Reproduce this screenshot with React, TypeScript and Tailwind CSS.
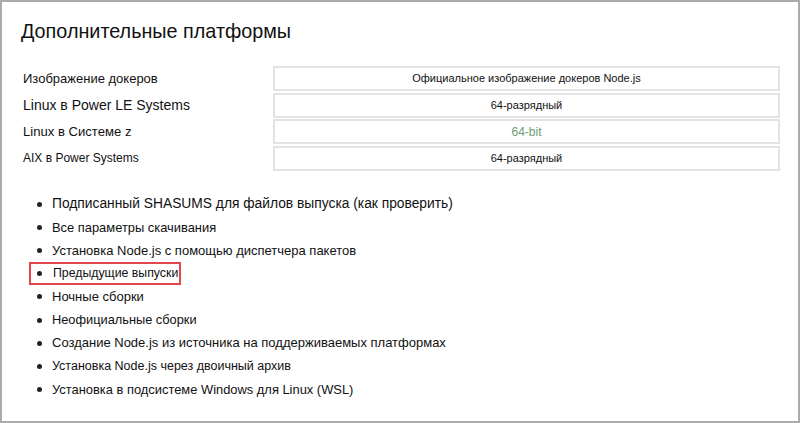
import { FC, ReactElement } from 'react'

type PlatformRow = {
  label: string
  labelSize: string
  value: string
  muted?: boolean
}

const platforms: PlatformRow[] = [
  { label: 'Изображение докеров', labelSize: 'text-[13px]', value: 'Официальное изображение докеров Node.js' },
  { label: 'Linux в Power LE Systems', labelSize: 'text-[14px]', value: '64-разрядный' },
  { label: 'Linux в Системе z', labelSize: 'text-[13.1px]', value: '64-bit', muted: true },
  { label: 'AIX в Power Systems', labelSize: 'text-[12px]', value: '64-разрядный' },
]

const links = [
  { text: 'Подписанный SHASUMS для файлов выпуска (как проверить)', size: 'text-[13.8px]' },
  { text: 'Все параметры скачивания', size: 'text-[12.9px]' },
  { text: 'Установка Node.js с помощью диспетчера пакетов', size: 'text-[13px]' },
  { text: 'Предыдущие выпуски', size: 'text-[12.3px]' },
  { text: 'Ночные сборки', size: 'text-[13px]' },
  { text: 'Неофициальные сборки', size: 'text-[12.8px]' },
  { text: 'Создание Node.js из источника на поддерживаемых платформах', size: 'text-[13px]' },
  { text: 'Установка Node.js через двоичный архив', size: 'text-[12.5px]' },
  { text: 'Установка в подсистеме Windows для Linux (WSL)', size: 'text-[12.9px]' },
]

const Bullet: FC = (): ReactElement => (
  <span className="w-[5px] h-[5px] rounded-full bg-[#222] shrink-0" />
)

const App: FC = (): ReactElement => {
  return (
    <div
      className="w-[800px] h-[423px] bg-white border-2 border-[#ababab] text-[#111] overflow-hidden"
      style={{ fontFamily: '"Liberation Sans", Arial, sans-serif' }}
    >
      <div className="pt-[15px] pl-[19px] pr-[18px]">
        <h1 className="text-[19.8px] leading-[28px] font-normal">Дополнительные платформы</h1>

        <div className="mt-[21px] flex flex-col gap-[1.5px]">
          {platforms.map((row) => (
            <div key={row.label} className="flex h-[25px]">
              <div className={`w-[252px] pl-[2px] flex items-center ${row.labelSize}`}>{row.label}</div>
              <div
                className={`flex-1 flex items-center justify-center border-2 border-[#e3e3e3] text-[11px] ${
                  row.muted ? 'text-[#6f9b72] text-[12px]' : ''
                }`}
              >
                {row.value}
              </div>
            </div>
          ))}
        </div>

        <ul className="mt-[22px] ml-[8px] flex flex-col">
          {links.map((item, i) =>
            i === 3 ? (
              <li key={item.text} className={`h-[23.2px] flex ${item.size}`}>
                <span className="flex items-center w-fit border-2 border-[#e2474b] pl-[6px] pr-[1px]">
                  <Bullet />
                  <span className="ml-[11px]">{item.text}</span>
                </span>
              </li>
            ) : (
              <li key={item.text} className={`h-[23.2px] flex items-center pl-[8px] ${item.size}`}>
                <Bullet />
                <span className="ml-[10px]">{item.text}</span>
              </li>
            )
          )}
        </ul>
      </div>
    </div>
  )
}

export default App
